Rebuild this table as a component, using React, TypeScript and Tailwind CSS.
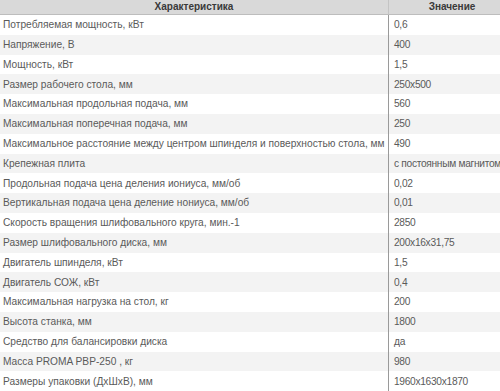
const rows: [string, string][] = [
  ['Потребляемая мощность, кВт', '0,6'],
  ['Напряжение, В', '400'],
  ['Мощность, кВт', '1,5'],
  ['Размер рабочего стола, мм', '250x500'],
  ['Максимальная продольная подача, мм', '560'],
  ['Максимальная поперечная подача, мм', '250'],
  ['Максимальное расстояние между центром шпинделя и поверхностью стола, мм', '490'],
  ['Крепежная плита', 'с постоянным магнитом'],
  ['Продольная подача цена деления иониуса, мм/об', '0,02'],
  ['Вертикальная подача цена деление нониуса, мм/об', '0,01'],
  ['Скорость вращения шлифовального круга, мин.-1', '2850'],
  ['Размер шлифовального диска, мм', '200x16x31,75'],
  ['Двигатель шпинделя, кВт', '1,5'],
  ['Двигатель СОЖ, кВт', '0,4'],
  ['Максимальная нагрузка на стол, кг', '200'],
  ['Высота станка, мм', '1800'],
  ['Средство для балансировки диска', 'да'],
  ['Масса PROMA PBP-250 , кг', '980'],
  ['Размеры упаковки (ДхШхВ), мм', '1960x1630x1870'],
]

export default function App() {
  return (
    <div
      className="w-[500px] h-[391px] overflow-hidden bg-white"
      style={{ fontFamily: '"Liberation Sans", Arial, sans-serif' }}
    >
      <div className="w-[515px]">
        {/* Header */}
        <div className="flex h-[15px] bg-[#d9d9d9] border-b border-[#bdbdbd] text-[10px] font-bold text-[#3a3a3a] leading-[14px]">
          <div className="w-[389px] text-center border-r border-[#c4c4c4]">Характеристика</div>
          <div className="flex-1 text-center">Значение</div>
        </div>

        {rows.map(([name, value], i) => (
          <div
            key={name}
            className={`flex h-[19.8px] items-center text-[10.2px] text-[#5a5a5a] ${
              i % 2 === 1 ? 'bg-[#f3f3f3]' : 'bg-white'
            }`}
          >
            <div className="w-[389px] h-full flex items-center pl-[3px] whitespace-nowrap overflow-hidden border-r border-[#9a9a9a]">
              {name}
            </div>
            <div className="flex-1 pl-[5px] whitespace-nowrap tracking-[-0.3px]">{value}</div>
          </div>
        ))}
      </div>
    </div>
  )
}
